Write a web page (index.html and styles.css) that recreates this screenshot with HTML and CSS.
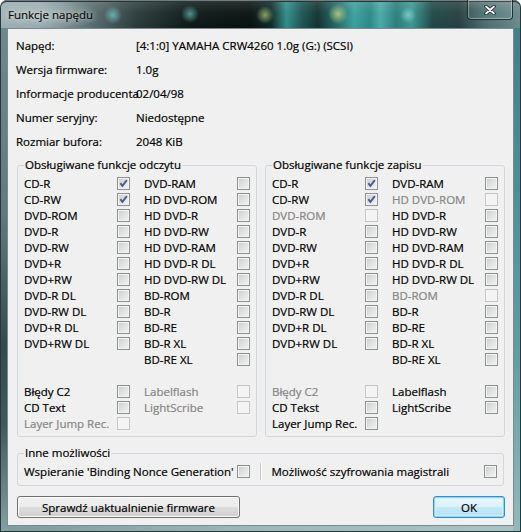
FILE: index.html
```html
<!DOCTYPE html>
<html lang="pl">
<head>
<meta charset="utf-8">
<title>Funkcje napędu</title>
<link rel="stylesheet" href="styles.css">
</head>
<body>
<div class="window">
  <div class="titlebar">
    <span class="title">Funkcje napędu</span>
    <span class="close">
      <svg width="12" height="10" viewBox="0 0 12 10"><path class="x-shadow" d="M2 1.5 L10 8.5 M10 1.5 L2 8.5"/><path class="x-fg" d="M2 1.5 L10 8.5 M10 1.5 L2 8.5"/></svg>
    </span>
  </div>
  <div class="client">
    <div class="info">
      <div class="info-row"><span class="info-label">Napęd:</span><span class="info-value">[4:1:0] YAMAHA CRW4260 1.0g (G:) (SCSI)</span></div>
      <div class="info-row"><span class="info-label">Wersja firmware:</span><span class="info-value">1.0g</span></div>
      <div class="info-row"><span class="info-label">Informacje producenta</span><span class="info-value">02/04/98</span></div>
      <div class="info-row"><span class="info-label">Numer seryjny:</span><span class="info-value">Niedostępne</span></div>
      <div class="info-row"><span class="info-label">Rozmiar bufora:</span><span class="info-value">2048 KiB</span></div>
    </div>

    <div class="groups">
      <fieldset class="group">
        <legend>Obsługiwane funkcje odczytu</legend>
        <div class="cols">
          <div class="col">
            <div class="item"><span class="lbl">CD-R</span><span class="cb checked"><svg width="11" height="11" viewBox="0 0 11 11"><path d="M2.3 5.2 L4.4 7.9 L8.8 2.2"/></svg></span></div>
            <div class="item"><span class="lbl">CD-RW</span><span class="cb checked"><svg width="11" height="11" viewBox="0 0 11 11"><path d="M2.3 5.2 L4.4 7.9 L8.8 2.2"/></svg></span></div>
            <div class="item"><span class="lbl">DVD-ROM</span><span class="cb"></span></div>
            <div class="item"><span class="lbl">DVD-R</span><span class="cb"></span></div>
            <div class="item"><span class="lbl">DVD-RW</span><span class="cb"></span></div>
            <div class="item"><span class="lbl">DVD+R</span><span class="cb"></span></div>
            <div class="item"><span class="lbl">DVD+RW</span><span class="cb"></span></div>
            <div class="item"><span class="lbl">DVD-R DL</span><span class="cb"></span></div>
            <div class="item"><span class="lbl">DVD-RW DL</span><span class="cb"></span></div>
            <div class="item"><span class="lbl">DVD+R DL</span><span class="cb"></span></div>
            <div class="item"><span class="lbl">DVD+RW DL</span><span class="cb"></span></div>
          </div>
          <div class="col">
            <div class="item"><span class="lbl">DVD-RAM</span><span class="cb"></span></div>
            <div class="item"><span class="lbl">HD DVD-ROM</span><span class="cb"></span></div>
            <div class="item"><span class="lbl">HD DVD-R</span><span class="cb"></span></div>
            <div class="item"><span class="lbl">HD DVD-RW</span><span class="cb"></span></div>
            <div class="item"><span class="lbl">HD DVD-RAM</span><span class="cb"></span></div>
            <div class="item"><span class="lbl">HD DVD-R DL</span><span class="cb"></span></div>
            <div class="item"><span class="lbl">HD DVD-RW DL</span><span class="cb"></span></div>
            <div class="item"><span class="lbl">BD-ROM</span><span class="cb"></span></div>
            <div class="item"><span class="lbl">BD-R</span><span class="cb"></span></div>
            <div class="item"><span class="lbl">BD-RE</span><span class="cb"></span></div>
            <div class="item"><span class="lbl">BD-R XL</span><span class="cb"></span></div>
            <div class="item"><span class="lbl">BD-RE XL</span><span class="cb"></span></div>
          </div>
        </div>
        <div class="cols extras">
          <div class="col">
            <div class="item"><span class="lbl">Błędy C2</span><span class="cb"></span></div>
            <div class="item"><span class="lbl">CD Text</span><span class="cb"></span></div>
            <div class="item disabled"><span class="lbl">Layer Jump Rec.</span><span class="cb"></span></div>
          </div>
          <div class="col">
            <div class="item disabled"><span class="lbl">Labelflash</span><span class="cb"></span></div>
            <div class="item disabled"><span class="lbl">LightScribe</span><span class="cb"></span></div>
          </div>
        </div>
      </fieldset>

      <fieldset class="group">
        <legend>Obsługiwane funkcje zapisu</legend>
        <div class="cols">
          <div class="col">
            <div class="item"><span class="lbl">CD-R</span><span class="cb checked"><svg width="11" height="11" viewBox="0 0 11 11"><path d="M2.3 5.2 L4.4 7.9 L8.8 2.2"/></svg></span></div>
            <div class="item"><span class="lbl">CD-RW</span><span class="cb checked"><svg width="11" height="11" viewBox="0 0 11 11"><path d="M2.3 5.2 L4.4 7.9 L8.8 2.2"/></svg></span></div>
            <div class="item disabled"><span class="lbl">DVD-ROM</span><span class="cb"></span></div>
            <div class="item"><span class="lbl">DVD-R</span><span class="cb"></span></div>
            <div class="item"><span class="lbl">DVD-RW</span><span class="cb"></span></div>
            <div class="item"><span class="lbl">DVD+R</span><span class="cb"></span></div>
            <div class="item"><span class="lbl">DVD+RW</span><span class="cb"></span></div>
            <div class="item"><span class="lbl">DVD-R DL</span><span class="cb"></span></div>
            <div class="item"><span class="lbl">DVD-RW DL</span><span class="cb"></span></div>
            <div class="item"><span class="lbl">DVD+R DL</span><span class="cb"></span></div>
            <div class="item"><span class="lbl">DVD+RW DL</span><span class="cb"></span></div>
          </div>
          <div class="col">
            <div class="item"><span class="lbl">DVD-RAM</span><span class="cb"></span></div>
            <div class="item disabled"><span class="lbl">HD DVD-ROM</span><span class="cb"></span></div>
            <div class="item"><span class="lbl">HD DVD-R</span><span class="cb"></span></div>
            <div class="item"><span class="lbl">HD DVD-RW</span><span class="cb"></span></div>
            <div class="item"><span class="lbl">HD DVD-RAM</span><span class="cb"></span></div>
            <div class="item"><span class="lbl">HD DVD-R DL</span><span class="cb"></span></div>
            <div class="item"><span class="lbl">HD DVD-RW DL</span><span class="cb"></span></div>
            <div class="item disabled"><span class="lbl">BD-ROM</span><span class="cb"></span></div>
            <div class="item"><span class="lbl">BD-R</span><span class="cb"></span></div>
            <div class="item"><span class="lbl">BD-RE</span><span class="cb"></span></div>
            <div class="item"><span class="lbl">BD-R XL</span><span class="cb"></span></div>
            <div class="item"><span class="lbl">BD-RE XL</span><span class="cb"></span></div>
          </div>
        </div>
        <div class="cols extras">
          <div class="col">
            <div class="item disabled"><span class="lbl">Błędy C2</span><span class="cb"></span></div>
            <div class="item"><span class="lbl">CD Tekst</span><span class="cb"></span></div>
            <div class="item"><span class="lbl">Layer Jump Rec.</span><span class="cb"></span></div>
          </div>
          <div class="col">
            <div class="item"><span class="lbl">Labelflash</span><span class="cb"></span></div>
            <div class="item"><span class="lbl">LightScribe</span><span class="cb"></span></div>
          </div>
        </div>
      </fieldset>
    </div>

    <fieldset class="group other">
      <legend>Inne możliwości</legend>
      <div class="other-row">
        <div class="item wide"><span class="lbl">Wspieranie 'Binding Nonce Generation'</span><span class="cb"></span></div>
        <span class="sep"></span>
        <div class="item wide"><span class="lbl">Możliwość szyfrowania magistrali</span><span class="cb"></span></div>
      </div>
    </fieldset>

    <div class="buttons">
      <span class="btn btn-update">Sprawdź uaktualnienie firmware</span>
      <span class="btn btn-ok">OK</span>
    </div>
  </div>
</div>
</body>
</html>
```

FILE: styles.css
```css
* { box-sizing: border-box; }
html, body { margin: 0; padding: 0; }
body {
  width: 521px;
  height: 532px;
  overflow: hidden;
  background: #ffffff;
  font-family: "Open Sans", "Noto Sans", sans-serif;
  font-size: 11.5px;
  color: #000;
  -webkit-text-stroke: 0.2px currentColor;
}

.window {
  width: 521px;
  height: 532px;
  border-radius: 7px 7px 0 0;
  overflow: hidden;
  display: flex;
  flex-direction: column;
  box-shadow: inset 0 0 0 1px #27373a;
  background:
    linear-gradient(to bottom, #6f8b8e 0%, #5f7b7e 40%, #34494b 65%, #405a5c 80%, #85a0a2 100%) left top / 8px 100% no-repeat,
    linear-gradient(to bottom, #3f7d83 0%, #4a9197 35%, #5e9ea3 65%, #93b9bc 100%) right top / 8px 100% no-repeat,
    linear-gradient(to right, #7f9b9d 0%, #9fb8ba 50%, #a9c4c6 100%);
}

.titlebar {
  height: 28px;
  flex: 0 0 28px;
  display: flex;
  align-items: flex-start;
  border-radius: 7px 7px 0 0;
  box-shadow: inset 0 1px 0 rgba(255,255,255,0.35), inset 1px 0 0 #27373a, inset -1px 0 0 #27373a, inset 0 2px 0 #27373a;
  background:
    linear-gradient(to bottom, rgba(255,255,255,0.14) 0%, rgba(255,255,255,0.04) 45%, rgba(0,0,0,0) 100%),
    radial-gradient(ellipse 60px 16px at 40px 15px, rgba(200,212,214,0.55), rgba(200,212,214,0)),
    radial-gradient(circle 9px at 113px 15px, rgba(110,185,185,0.85), rgba(110,185,185,0)),
    radial-gradient(circle 9px at 190px 14px, rgba(90,170,165,0.8), rgba(90,170,165,0)),
    radial-gradient(circle 9px at 265px 15px, rgba(160,190,110,0.8), rgba(160,190,110,0)),
    radial-gradient(circle 10px at 338px 14px, rgba(185,205,130,0.85), rgba(185,205,130,0)),
    radial-gradient(circle 8px at 408px 15px, rgba(140,220,215,0.7), rgba(140,220,215,0)),
    linear-gradient(to right,
      #9aacaf 0%, #8fa2a5 8%, #617779 16%, #2a3b3b 26%, #0d1a18 36%, #07110f 48%,
      #0e2a28 52%, #2f8c89 55%, #1b5452 58%, #103331 61%, #27706d 65%, #3aa09c 68%,
      #2a8784 71%, #48aaa7 73%, #2b7d7a 76%, #3c9793 79%, #1e4847 83%, #263f40 88%,
      #4b6b6d 93%, #6c8b8d 100%);
}

.title {
  margin: 8px 0 0 8px;
  line-height: 14px;
  color: #0b0b0b;
  text-shadow: 0 0 6px rgba(255,255,255,0.55), 0 0 3px rgba(255,255,255,0.45);
}

.close {
  margin-left: auto;
  margin-right: 8px;
  width: 46px;
  height: 20px;
  display: flex;
  align-items: center;
  justify-content: center;
  border: 1px solid rgba(20,35,35,0.85);
  border-top: none;
  border-radius: 0 0 4px 4px;
  box-shadow: inset 0 0 0 1px rgba(255,255,255,0.35);
  background: linear-gradient(to bottom, rgba(255,255,255,0.12), rgba(255,255,255,0.04) 50%, rgba(120,200,200,0.12));
}
.close svg { display: block; }
.x-shadow { stroke: #1c2a2c; stroke-width: 3.6; fill: none; stroke-linecap: round; }
.x-fg { stroke: #ffffff; stroke-width: 1.8; fill: none; stroke-linecap: round; }

.client {
  margin: 0 7px 0 7px;
  height: 498px;
  border: 1px solid #7b8a8f;
  background: #f0f0f0;
  display: flex;
  flex-direction: column;
}

.info { padding: 4px 0 0 8px; }
.info-row {
  display: flex;
  height: 24px;
  align-items: center;
  white-space: nowrap;
}
.info-label { flex: 0 0 120px; width: 120px; }

.groups {
  display: flex;
  gap: 8px;
  margin: 4px 0 0 9px;
}

.group {
  margin: 0;
  padding: 2px 6px 5px 6px;
  border: 1px solid #d0d9df;
  border-radius: 3px;
  min-inline-size: 0;
  width: 240px;
}
.group legend {
  padding: 0 1px;
  line-height: 16px;
  height: 16px;
}

.cols { display: flex; gap: 14px; }
.col { display: flex; flex-direction: column; width: 106px; }
.extras { margin-top: 16px; }

.item {
  display: flex;
  align-items: center;
  height: 16px;
  white-space: nowrap;
}
.item .lbl { flex: 1 1 auto; min-width: 0; }
.item.disabled .lbl { color: #858585; }
.item.wide { width: 226px; }

.cb {
  flex: 0 0 13px;
  width: 13px;
  height: 13px;
  border: 1px solid #8e8f8f;
  background: linear-gradient(135deg, #c9cbce 0%, #e2e3e4 55%, #f4f4f4 100%);
  box-shadow: inset 0 0 0 1px #f4f4f4;
  display: flex;
  align-items: center;
  justify-content: center;
}
.item.disabled .cb {
  border-color: #c6c6c6;
  background: #f4f4f4;
  box-shadow: none;
}
.cb svg { display: block; }
.cb svg path {
  fill: none;
  stroke: #4a5d96;
  stroke-width: 1.9;
  stroke-linejoin: miter;
}

.other {
  width: 487px;
  margin: 8px 0 0 9px;
}
.other-row { display: flex; align-items: center; }
.sep {
  width: 2px;
  height: 17px;
  margin: 0 10px 0 10px;
  border-left: 1px solid #c9c9c9;
  border-right: 1px solid #ffffff;
}

.buttons {
  display: flex;
  justify-content: space-between;
  margin: 10px 8px 0 9px;
}
.btn {
  height: 22px;
  display: flex;
  align-items: center;
  justify-content: center;
  border: 1px solid #707070;
  border-radius: 3px;
  box-shadow: inset 0 0 0 1px #fbfbfb;
  background: linear-gradient(to bottom, #f2f2f2 0%, #ebebeb 48%, #dddddd 52%, #cfcfcf 100%);
}
.btn-update { width: 223px; }
.btn-ok {
  width: 72px;
  border-color: #2b8fd2;
  box-shadow: inset 0 0 0 1px #8fd6f6, inset 0 0 0 2px #d3f0fc;
  background: linear-gradient(to bottom, #eaf7fd 0%, #dcf2fc 48%, #c6e9fa 52%, #b2e0f6 100%);
}
```
